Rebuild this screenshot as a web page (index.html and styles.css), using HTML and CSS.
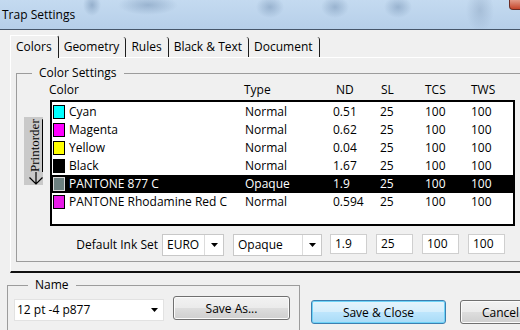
FILE: index.html
```html
<!DOCTYPE html>
<html lang="en">
<head>
    <meta charset="UTF-8">
    <title>Trap Settings</title>
    <link rel="stylesheet" href="styles.css">
</head>
<body>
    <div class="window">
        <!-- barra de titulo -->
        <div class="titlebar">
            <span class="title">Trap Settings</span>
            <span class="close-btn"></span>
        </div>

        <div class="tabs">
            <div class="tab active">Colors</div>
            <div class="tab">Geometry</div>
            <div class="tab">Rules</div>
            <div class="tab">Black &amp; Text</div>
            <div class="tab">Document</div>
        </div>

        <div class="panel">
            <fieldset class="group color-group">
                <legend>Color Settings</legend>
                <div class="head">
                    <span>Color</span>
                    <span>Type</span>
                    <span>ND</span>
                    <span>SL</span>
                    <span>TCS</span>
                    <span>TWS</span>
                </div>

                <div class="list-area">
                    <div class="printorder">
                        <span class="po-text">Printorder</span>
                        <svg class="po-arrow" width="19" height="13" viewBox="0 0 19 13">
                            <path d="M12 0 V12 M5.5 5.5 L12 12 L18.5 5.5" fill="none" stroke="#000" stroke-width="1.2"/>
                        </svg>
                    </div>

                    <div class="list">
                        <div class="item">
                            <span class="name"><i class="swatch" style="background:#00ffff"></i>Cyan</span>
                            <span>Normal</span><span>0.51</span><span>25</span><span>100</span><span>100</span>
                        </div>
                        <div class="item">
                            <span class="name"><i class="swatch" style="background:#ff00ff"></i>Magenta</span>
                            <span>Normal</span><span>0.62</span><span>25</span><span>100</span><span>100</span>
                        </div>
                        <div class="item">
                            <span class="name"><i class="swatch" style="background:#ffff00"></i>Yellow</span>
                            <span>Normal</span><span>0.04</span><span>25</span><span>100</span><span>100</span>
                        </div>
                        <div class="item">
                            <span class="name"><i class="swatch" style="background:#000000"></i>Black</span>
                            <span>Normal</span><span>1.67</span><span>25</span><span>100</span><span>100</span>
                        </div>
                        <div class="item selected">
                            <span class="name"><i class="swatch" style="background:#6c8080"></i>PANTONE 877 C</span>
                            <span>Opaque</span><span>1.9</span><span>25</span><span>100</span><span>100</span>
                        </div>
                        <div class="item">
                            <span class="name"><i class="swatch" style="background:#e61ae6"></i>PANTONE Rhodamine Red C</span>
                            <span>Normal</span><span>0.594</span><span>25</span><span>100</span><span>100</span>
                        </div>
                    </div>
                </div>

                <div class="ink-row">
                    <span class="ink-label">Default Ink Set</span>
                    <div class="combo combo-euro">
                        <span class="combo-text">EURO</span>
                        <span class="combo-arrow"><svg width="7" height="4" viewBox="0 0 7 4"><path d="M0 0 H7 L3.5 4 Z" fill="#000"/></svg></span>
                    </div>
                    <div class="combo combo-type">
                        <span class="combo-text">Opaque</span>
                        <span class="combo-arrow"><svg width="7" height="4" viewBox="0 0 7 4"><path d="M0 0 H7 L3.5 4 Z" fill="#000"/></svg></span>
                    </div>
                    <span class="field">1.9</span>
                    <span class="field">25</span>
                    <span class="field">100</span>
                    <span class="field">100</span>
                </div>
            </fieldset>
        </div>

        <div class="bottom">
            <fieldset class="group name-group">
                <legend>Name</legend>
                <div class="combo combo-name">
                    <span class="combo-text">12 pt -4 p877</span>
                    <span class="combo-arrow plain"><svg width="7" height="4" viewBox="0 0 7 4"><path d="M0 0 H7 L3.5 4 Z" fill="#000"/></svg></span>
                </div>
                <button class="btn btn-saveas">Save As...</button>
            </fieldset>
            <button class="btn btn-default">Save &amp; Close</button>
            <button class="btn btn-cancel">Cancel</button>
        </div>
    </div>
</body>
</html>
```

FILE: styles.css
```css
body {
    margin: 0;
    background: #f0f0f0;
    font-family: "Open Sans", "Noto Sans", sans-serif;
    font-size: 12px;
    color: #000;
}
.window {
    width: 520px;
    height: 330px;
    overflow: hidden;
    background: #f0f0f0;
}

/* barra de titulo */
.titlebar {
    display: flex;
    height: 29px;
    border-bottom: 1px solid #46566a;
    background:
        radial-gradient(ellipse 9px 11px at 92px 5px, rgba(105, 135, 170, 0.5), transparent),
        radial-gradient(ellipse 30px 10px at 148px 5px, rgba(105, 135, 170, 0.45), transparent),
        radial-gradient(ellipse 14px 11px at 270px 7px, rgba(105, 135, 170, 0.45), transparent),
        radial-gradient(ellipse 14px 11px at 335px 7px, rgba(105, 135, 170, 0.45), transparent),
        radial-gradient(ellipse 14px 11px at 398px 7px, rgba(105, 135, 170, 0.45), transparent),
        radial-gradient(ellipse 14px 22px at 480px 10px, rgba(120, 145, 175, 0.35), transparent),
        linear-gradient(#c4daf0, #b6cfe9);
}
.title {
    padding-left: 2px;
    line-height: 30px;
    font-size: 12px;
}
.close-btn {
    margin-left: auto;
    margin-right: -6px;
    width: 15px;
    height: 9px;
    border: 1px solid #6b2c24;
    border-top: none;
    border-radius: 0 0 0 4px;
    background: linear-gradient(#e39a88, #c5452a);
}

/* abas */
.tabs {
    display: flex;
    align-items: flex-end;
    margin-top: 5px;
    padding-left: 10px;
    height: 22px;
}
.tab {
    height: 20px;
    line-height: 20px;
    padding: 0 6px 0 5px;
    border-right: 1px solid #1e1e1e;
    border-top-right-radius: 3px;
}
.tab.active {
    position: relative;
    z-index: 1;
    height: 22px;
    line-height: 22px;
    margin-bottom: -1px;
    padding-left: 5px;
    border-left: 1px solid #fff;
    border-top: 1px solid #fff;
    background: #f0f0f0;
}

.panel {
    width: 520px;
    margin-left: 10px;
    padding-bottom: 9px;
    border-top: 1px solid #fff;
    border-left: 1px solid #fff;
    border-bottom: 2px solid #111;
}

/* grupos */
.group {
    margin: 0;
    padding: 0;
    border: 1px solid #9c9c9c;
    min-width: 0;
}
.group legend {
    padding: 0 7px;
    line-height: 16px;
}
.color-group {
    margin: 7px 0 0 5px;
    padding: 1px 0 5px 0;
}
.color-group legend {
    margin-left: 15px;
}

.head {
    display: grid;
    grid-template-columns: 195px 92px 45px 44px 46px 40px;
    padding-left: 32px;
    line-height: 16px;
    margin-bottom: 2px;
}

.list-area {
    display: flex;
    align-items: flex-start;
}
.printorder {
    display: flex;
    flex-direction: column;
    flex-shrink: 0;
    width: 19px;
    height: 68px;
    margin: 17px 0 0 7px;
    padding-top: 3px;
    box-sizing: border-box;
    background: #c9c9c9;
}
.po-text {
    writing-mode: vertical-rl;
    transform: rotate(180deg);
    font-family: "Liberation Serif", serif;
    font-size: 13px;
    line-height: 15px;
    height: 52px;
    margin-left: 3px;
    text-decoration: underline;
}
.po-arrow {
    display: block;
}

.list {
    flex-shrink: 0;
    width: 465px;
    height: 126px;
    margin-left: 7px;
    padding-top: 1px;
    box-sizing: border-box;
    border: 2px solid #000;
    background: #fff;
}
.item {
    display: grid;
    grid-template-columns: 193px 88px 47px 45px 46px 40px;
    height: 18px;
    line-height: 18px;
}
.item.selected {
    background: #000;
    color: #fff;
}
.name {
    display: flex;
    align-items: center;
    gap: 4px;
    padding-left: 1px;
}
.swatch {
    width: 12px;
    height: 14px;
    box-sizing: border-box;
    border: 1px solid #000;
}
.selected .swatch {
    border-color: #d8d8d8;
}

/* linha de tinta padrao */
.ink-row {
    display: flex;
    align-items: flex-start;
    margin-top: 8px;
}
.ink-label {
    flex-shrink: 0;
    width: 141px;
    text-align: right;
    line-height: 22px;
    margin-right: 4px;
}
.combo {
    display: flex;
    flex-shrink: 0;
    height: 22px;
    box-sizing: border-box;
    border: 1px solid #c8c8c8;
    background: #fff;
    line-height: 20px;
}
.combo-text {
    flex: 1;
    padding-left: 4px;
}
.combo-arrow {
    display: flex;
    align-items: center;
    justify-content: center;
    width: 18px;
    border-left: 1px solid #dcdcdc;
}
.combo-arrow.plain {
    border-left: none;
}
.combo-euro {
    width: 62px;
}
.combo-type {
    width: 89px;
    margin-left: 9px;
}
.field {
    flex-shrink: 0;
    width: 37px;
    height: 20px;
    box-sizing: border-box;
    margin-left: 9px;
    padding-left: 4px;
    border: 1px solid #cfcfcf;
    background: #fff;
    line-height: 18px;
}
.combo-type + .field {
    margin-left: 8px;
}

/* parte de baixo */
.bottom {
    display: flex;
    align-items: flex-start;
    margin-top: 4px;
}
.name-group {
    display: flex;
    align-items: flex-start;
    flex-shrink: 0;
    width: 293px;
    height: 80px;
    box-sizing: border-box;
    margin-left: 7px;
    padding: 6px 0 0 6px;
}
.name-group legend {
    margin-left: 14px;
}
.combo-name {
    width: 150px;
    border-color: #e2e2e2;
}
.combo-name .combo-text {
    padding-left: 2px;
}
.btn {
    flex-shrink: 0;
    height: 24px;
    padding: 0;
    border: 1px solid #707070;
    border-radius: 3px;
    background: linear-gradient(#f2f2f2 0%, #ebebeb 48%, #dddddd 52%, #cfcfcf 100%);
    box-shadow: inset 0 0 0 1px #fbfbfb;
    font-family: "Open Sans", "Noto Sans", sans-serif;
    font-size: 12px;
    color: #000;
}
.btn-saveas {
    width: 117px;
    margin: -3px 0 0 9px;
}
.btn-default {
    width: 135px;
    margin: 23px 0 0 11px;
    border-color: #3c7fb1;
    background: linear-gradient(#e5f4fc 0%, #d5eefc 48%, #bde5fc 52%, #a8dbf7 100%);
    box-shadow: inset 0 0 0 1px #6fd3f7;
}
.btn-cancel {
    width: 80px;
    margin: 23px 0 0 14px;
    text-align: left;
    padding-left: 21px;
}
```
